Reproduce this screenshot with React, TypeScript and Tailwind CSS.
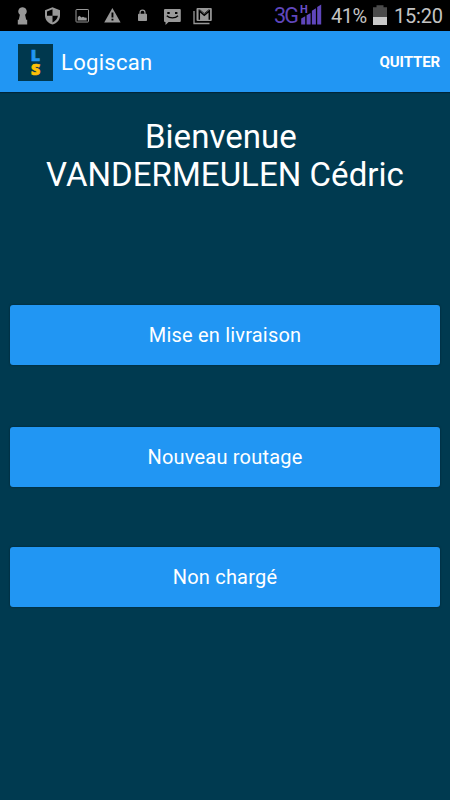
import React from 'react';

interface MenuButtonProps {
  label: string;
}

const NotificationIcons: React.FC = () => (
  <div className="flex items-center text-[#989898]">
    <svg className="ml-[17px] h-[32px] w-[11px]" viewBox="17 0 11 32" fill="currentColor">
      <path d="M22.5 7.3a4.2 4.2 0 0 1 2.6 7.5l1.1 5h1v4.700h-9.400v-4.700h1l1.100-5a4.200 4.200 0 0 1 2.600-7.500z" />
    </svg>
    <svg className="ml-[17px] h-[32px] w-[15px]" viewBox="45 0 15 32">
      <path d="M52.500 7.200 60 10.300v5.200c0 4.400-3.100 7.800-7.500 9-4.400-1.200-7.500-4.600-7.500-9v-5.200z" fill="currentColor" />
      <path d="M52.500 9.300v6.500h-5.500v-4.200zM52.500 15.800h5.400c-.5 3.200-2.500 5.500-5.400 6.600z" fill="#000" />
    </svg>
    <svg className="ml-[15px] h-[32px] w-[15px]" viewBox="75 0 15 32" fill="none">
      <rect x="76" y="9.500" width="12.500" height="12.500" rx=".6" stroke="currentColor" strokeWidth="1" />
      <path d="M77.800 20.500v-3.500l1.700-1.300 2 1.800 1.500-.8 1.500.8 2.200.3v2.700z" fill="currentColor" />
    </svg>
    <svg className="ml-[14px] h-[32px] w-[17px]" viewBox="104 0 17 32">
      <path d="M112.400 8 120.600 22.600h-16.400z" fill="currentColor" />
      <path d="M111.500 12.500h1.900v5h-1.900zM111.500 18.800h1.900v1.800h-1.900z" fill="#000" />
    </svg>
    <svg className="ml-[17px] h-[32px] w-[10px]" viewBox="138 0 10 32">
      <rect x="138" y="13.700" width="9" height="7.300" rx=".8" fill="currentColor" />
      <path d="M140 14v-1.300a2.500 2.500 0 0 1 5 0V14" stroke="currentColor" strokeWidth="1.200" fill="none" />
    </svg>
    <svg className="ml-[15px] h-[32px] w-[18px]" viewBox="163 0 18 32">
      <path d="M165 9h14.800a1 1 0 0 1 1 1v11a1 1 0 0 1-1 1h-11.200L165.500 25v-3h-.5a1 1 0 0 1-1-1V10a1 1 0 0 1 1-1z" fill="currentColor" />
      <path d="M167.300 12h2.400v2h-2.400zM175 12h2.400v2H175z" fill="#000" />
      <path d="M166.800 15.700c2.800 3 8.400 3 11.200 0" stroke="#000" strokeWidth="1.300" fill="none" />
    </svg>
    <svg className="ml-[12px] h-[32px] w-[20px]" viewBox="193 0 20 32" fill="none">
      <path d="M194 11v12.500h15.500" stroke="currentColor" strokeWidth="1.300" />
      <rect x="196.500" y="8" width="15.300" height="13" rx="1" fill="currentColor" />
      <path d="M199.300 19.800V11l5 4.300 5-4.300v8.800" stroke="#000" strokeWidth="1.500" />
      <path d="m199.500 9.500 4.800 4 4.800-4" stroke="#000" strokeWidth=".7" />
    </svg>
  </div>
);

const StatusBar: React.FC = () => (
  <div className="flex h-[31px] items-start bg-black text-[20px] leading-[33px] text-[#c4c4c4]">
    <NotificationIcons />
    <div className="ml-auto flex items-start">
      <span className="w-[23px] whitespace-nowrap text-[21.500px] leading-[31px] tracking-[-1.800px] text-[#5f46bb]">3G</span>
      <div className="relative ml-[3px] h-[32px] w-[22px]">
        <span className="absolute left-0 top-[3px] text-[11px] font-bold leading-[13px] text-[#6a4fc8]">H</span>
        <svg className="h-full w-full" viewBox="300 0 22 32" fill="#5f46bb">
          <path d="M301.200 18.500l4-2.300v8.300h-4zM306.600 15.200l4-2.300v11.600h-4zM311.900 10.800l4-2.600v16.300h-4zM317.200 7l4-2.500v20h-4z" />
        </svg>
      </div>
      <span className="ml-[9px] w-[36px] whitespace-nowrap tracking-[-0.500px]">41%</span>
      <svg className="ml-[6px] h-[32px] w-[14px]" viewBox="373 0 14 32">
        <path d="M373 7.300h3.500v-2h7v2h3.500V17h-14z" fill="#4b4b4b" />
        <path d="M373 17h14v8h-14z" fill="#c9c9c9" />
      </svg>
      <span className="ml-[7px] mr-[7px] w-[49px] whitespace-nowrap tracking-[-0.200px]">15:20</span>
    </div>
  </div>
);

const AppLogo: React.FC = () => (
  <div className="flex h-[37px] w-[35px] flex-col items-center justify-center bg-[#00384e] font-['Open_Sans',sans-serif] text-[16px] font-extrabold leading-[14px]">
    <span className="text-[#2196f3] [-webkit-text-stroke:0.7px_#2196f3]">L</span>
    <span className="text-[#ffc107] [-webkit-text-stroke:0.7px_#ffc107]">S</span>
  </div>
);

const AppBar: React.FC = () => (
  <header className="flex h-[61px] items-center bg-[#2196f3] pl-[18px] pr-[10px] pt-px text-white shadow-[0_1px_1px_#00263a]">
    <AppLogo />
    <h1 className="ml-[8px] text-[22px] tracking-[0.300px]">Logiscan</h1>
    <button className="ml-auto pt-px text-[15px] font-bold tracking-[-0.100px]">QUITTER</button>
  </header>
);

const MenuButton: React.FC<MenuButtonProps> = ({ label }) => (
  <button className="h-[60px] w-full rounded-[3px] bg-[#2196f3] text-[20px] tracking-[0.200px] text-white shadow-[0_0_2px_#00202e]">
    {label}
  </button>
);

export default function App() {
  return (
    <div className="flex h-[800px] w-[450px] flex-col overflow-hidden bg-[#003a50] font-[Roboto,sans-serif]">
      <StatusBar />
      <AppBar />

      {/* Welcome */}
      <h2 className="mt-[26px] h-[187px] whitespace-pre text-center text-[33px] leading-[38px] tracking-[0.050px] text-white">
        {'Bienvenue\u00a0\nVANDERMEULEN Cédric'}
      </h2>

      {/* Actions */}
      <main className="flex flex-col px-[10px]">
        <MenuButton label="Mise en livraison" />
        <div className="mt-[62px] mb-[60px]">
          <MenuButton label="Nouveau routage" />
        </div>
        <MenuButton label="Non chargé" />
      </main>
    </div>
  );
}
